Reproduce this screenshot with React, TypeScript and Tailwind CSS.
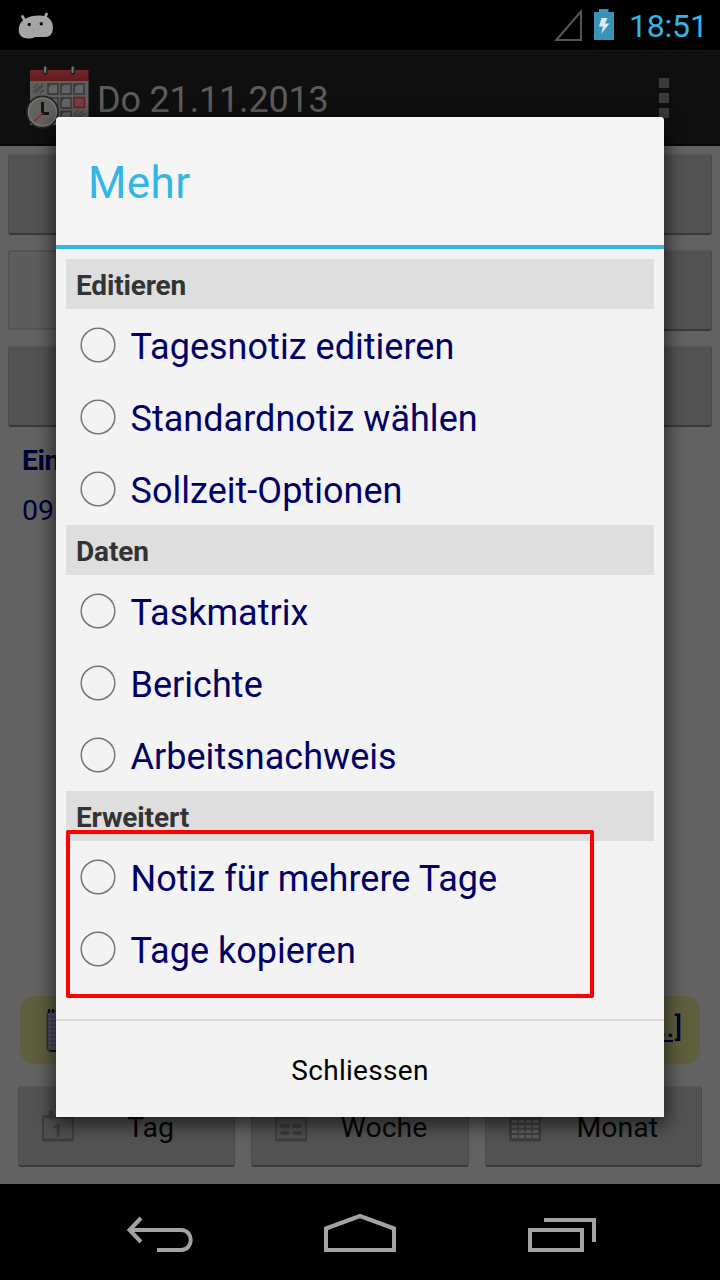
import type { ReactNode } from "react";

const sections = [
  { title: "Editieren", items: ["Tagesnotiz editieren", "Standardnotiz wählen", "Sollzeit-Optionen"] },
  { title: "Daten", items: ["Taskmatrix", "Berichte", "Arbeitsnachweis"] },
  { title: "Erweitert", items: ["Notiz für mehrere Tage", "Tage kopieren"] },
];

function AndroidHead() {
  return (
    <svg className="ml-[18px] h-8 w-9" viewBox="0 0 36 32">
      <path d="M4.500 7.500 7 12M28.500 5 27 9" stroke="#a6a6a6" strokeWidth="2.800" strokeLinecap="round" />
      <path d="M8 9.500C13 6 24 5.500 29 8C34 10.500 36 17 34.500 22C33 28 29 28 25 28L17 28C14 29.500 9 30.500 5 28.500C0 26 0 19 2 15C3.500 12 5.500 11 8 9.500Z" fill="#a6a6a6" />
      <circle cx="11.300" cy="15.500" r="1.700" fill="#000" />
      <circle cx="23.300" cy="14.700" r="1.700" fill="#000" />
      <path d="M15 20.500h1M20 20.500h1M15 23h1" stroke="#888" strokeWidth="1" />
    </svg>
  );
}

function StatusBar() {
  return (
    <div className="flex h-[50px] items-center bg-black">
      <AndroidHead />
      <svg className="ml-[500px] h-[34px] w-[30px] shrink-0" viewBox="0 0 30 34">
        <path d="M2.300 32 27 3.500V32Z" fill="none" stroke="#555" strokeWidth="2" />
      </svg>
      <svg className="ml-[9px] h-[34px] w-[22px] shrink-0" viewBox="0 0 22 34">
        <path d="M1 4H6V1H15.500V4H21V32H1Z" fill="#3994b8" />
        <path d="M8.500 10H14.500L12 15.500H16.500L8 26L10 18.500H6Z" fill="#dcecf2" />
      </svg>
      <span className="mt-[2px] ml-[14px] text-[32px] leading-[50px] tracking-[-0.200px] whitespace-nowrap text-[#33b5e5]">18:51</span>
    </div>
  );
}

function AppIcon() {
  return (
    <svg className="ml-[25px] h-[64px] w-[64px]" viewBox="25 65 64 64">
      <defs>
        <linearGradient id="red" x1="0" y1="0" x2="0" y2="1">
          <stop offset="0" stopColor="#742526" />
          <stop offset="1" stopColor="#641a1c" />
        </linearGradient>
      </defs>
      <rect x="30" y="80" width="58.500" height="45" fill="#5f5f5f" />
      <rect x="30" y="70" width="58.500" height="11" fill="url(#red)" />
      {[45.500, 73].map((x) => (
        <g key={x}>
          <rect x={x - 2.200} y="66" width="4.400" height="9" rx="2" fill="#202020" />
          <rect x={x - 1.400} y="66.500" width="2" height="6.500" rx="1" fill="#777" />
        </g>
      ))}
      <path d="M33 88l5-4M33 92l10-8M35 93l8-7M40 93l4-3M74 114l5-4M74 118l10-8M78 118l7-5" stroke="#454545" strokeWidth="1.500" />
      {[[47.500, 83.500], [60.500, 83.500], [73.500, 83.500], [47.500, 97.500], [60.500, 97.500], [60.500, 111]].map(([x, y]) => (
        <g key={`${x}-${y}`}>
          <rect x={x + 0.500} y={y + 0.500} width="10" height="10" fill="#656565" stroke="#383838" strokeWidth="1.600" />
          <path d={`M${x + 1} ${y + 1}h3l-3 3z`} fill="#383838" />
        </g>
      ))}
      <rect x="74" y="97.500" width="10.500" height="10" fill="#734043" stroke="#74191c" strokeWidth="1.500" />
      <circle cx="42.500" cy="112" r="16.500" fill="#252525" />
      <circle cx="42.500" cy="112" r="14" fill="#62625f" stroke="#777773" strokeWidth="1.500" />
      <path d="M42.500 102V113.500H49" fill="none" stroke="#151515" strokeWidth="3" />
      <path d="M43 113 34 121.500" stroke="#8b2929" strokeWidth="1.400" />
    </svg>
  );
}

function ActionBar() {
  return (
    <div className="flex h-24 border-t border-b-2 border-t-[#181818] border-b-[#080808] bg-[#0f0f0f]">
      <div className="pt-[14px]"><AppIcon /></div>
      <span className="ml-2 pt-[28px] text-[36px] leading-[42px] font-normal tracking-[-0.180px] whitespace-nowrap text-[#5c5c5c]">Do 21.11.2013</span>
      <div className="mr-[51px] ml-auto flex flex-col gap-[5px] pt-[27px]">
        <i className="size-[10px] bg-[#3b3b3b]" />
        <i className="size-[10px] bg-[#3b3b3b]" />
        <i className="size-[10px] bg-[#3b3b3b]" />
      </div>
    </div>
  );
}

function Panel({ className = "", children }: { className?: string; children?: ReactNode }) {
  return (
    <div className={`h-[81px] rounded-[3px] border border-t-[#595959] border-r-[#494949] border-b-2 border-b-[#3a3a3a] border-l-[#4c4c4c] bg-[#535353] ${className}`}>
      {children}
    </div>
  );
}

function CalendarIcon({ kind }: { kind: string }) {
  return (
    <svg className="h-[32px] w-[34px]" viewBox="0 0 34 32">
      <path d="M2 6H32V30H2Z" fill="#505050" stroke="#3e3e3e" strokeWidth="2" />
      <path d="M2 7H32M2 30H32" stroke="#3e3e3e" strokeWidth="3" />
      <path d="M10 3V7M24 3V7" stroke="#3d3d3d" strokeWidth="5" strokeLinecap="round" />
      {kind === "Tag" && <text x="16.500" y="27" textAnchor="middle" fontSize="19" fontWeight="bold" fill="#3a3a3a">1</text>}
      {kind === "Woche" && <path d="M6.500 16h9M18.500 16h9M6.500 23h9M18.500 23h9" stroke="#3a3a3a" strokeWidth="3.500" />}
      {kind === "Monat" && (
        <>
          <rect x="3" y="7" width="28" height="22" fill="#404040" />
          <path d="M4 11.500h27M4 16.500h27M4 21.500h27M4 26.500h27" stroke="#5e5e5e" strokeWidth="3" strokeDasharray="5.500 1.500" />
        </>
      )}
    </svg>
  );
}

function PeriodButton({ label }: { label: string }) {
  return (
    <Panel className="flex items-center pl-[22px]">
      <CalendarIcon kind={label} />
      <span className="mt-[3px] flex-1 pl-[8px] text-center text-[28.500px] leading-8 text-[#060606]">{label}</span>
      <span className="w-4" />
    </Panel>
  );
}

function Content() {
  return (
    <div className="flex h-[1038px] flex-col bg-[#626262]">
      <div className="flex flex-col gap-[15px] px-2 pt-2">
        <Panel />
        <div className="flex h-[81px]">
          <div className="h-20 w-1/2 rounded-[3px] border-2 border-[#535353] bg-[#5d5d5d]" />
          <Panel className="w-1/2" />
        </div>
        <Panel />
      </div>
      <div className="mt-[18px] ml-[22px] text-[28.500px] leading-8 text-[#000038]">
        <div className="font-bold tracking-[-0.500px]">Eintrag</div>
        <div className="mt-[18px]"><span>09</span><span className="ml-1">:00</span></div>
      </div>
      <div className="mx-5 mt-auto flex h-[68px] items-center justify-between rounded-[14px] bg-[#5f5f3d] pr-[18px] pl-[26px]">
        <svg className="h-11 w-9" viewBox="0 0 36 44">
          <rect x="1.500" y="3" width="33" height="40" rx="3" fill="#555560" stroke="#303030" strokeWidth="1.500" />
          <path d="M2 9h32M2 13h32M2 17h32M2 21h32M2 25h32M2 29h32M2 33h32M2 37h32" stroke="#3a3a68" />
          <path d="M5.500 5V42" stroke="#703344" />
          <path d="M3 1v4M7 1v4M11 1v4M15 1v4M4 43h28" stroke="#111" strokeWidth="2" />
        </svg>
        <span className="mb-[5px] text-[28px] leading-8 font-medium text-[#000030] underline decoration-2 underline-offset-[3px]">[...]</span>
      </div>
      <div className="mt-[22px] mb-[17px] grid grid-cols-3 gap-4 px-[18px]">
        <PeriodButton label="Tag" />
        <PeriodButton label="Woche" />
        <PeriodButton label="Monat" />
      </div>
    </div>
  );
}

function NavigationBar() {
  return (
    <div className="flex h-24 items-center bg-black pl-[126px]">
      <svg className="h-12 w-[70px]" viewBox="126 1208 70 48" fill="none" stroke="#a3a3a3" strokeWidth="4">
        <path d="M141 1218 129.500 1230 141 1242M130 1230H181C194 1230 194 1250 181 1250H157" />
      </svg>
      <svg className="ml-[126px] h-12 w-[76px]" viewBox="322 1208 76 48" fill="none" stroke="#a3a3a3" strokeWidth="4">
        <path d="M326 1250V1228.500L360 1216L394 1228.500V1250Z" />
      </svg>
      <svg className="ml-[128px] h-12 w-[72px]" viewBox="526 1208 72 48" fill="none" stroke="#a3a3a3" strokeWidth="4">
        <path d="M530 1230H582V1250H530ZM544 1220H594V1242" />
      </svg>
    </div>
  );
}

function MoreDialog() {
  return (
    <div role="dialog" className="absolute top-[117px] left-14 flex h-[1000px] w-[608px] flex-col rounded-t-[4px] bg-[#f3f3f3] shadow-[0_5px_18px_3px_rgba(0,0,0,0.6)]">
      <h1 className="h-32 rounded-t-[4px] bg-[#f5f5f5] pt-[40px] pl-8 text-[44px] leading-[52px] tracking-[0.400px] text-[#33b5e5]">Mehr</h1>
      <div className="h-1 bg-[#33b5e5]" />
      <div className="flex-1 px-[10px] pt-[10px]">
        {sections.map((section) => (
          <section key={section.title}>
            <h2 className="h-[50px] bg-[#dedede] pt-[2px] pl-[10px] text-[28px] leading-[50px] font-bold tracking-[-0.150px] text-[#333]">{section.title}</h2>
            {section.items.map((item) => (
              <label key={item} className="flex h-[72px] items-center pl-[14px]">
                <svg className="size-9 shrink-0" viewBox="0 0 36 36">
                  <circle cx="18" cy="18" r="16.800" fill="none" stroke="#777" strokeWidth="1.500" />
                </svg>
                <span className="mt-1 ml-[14.500px] text-[36px] leading-[42px] tracking-[0.030px] whitespace-nowrap text-[#000066]">{item}</span>
              </label>
            ))}
          </section>
        ))}
      </div>
      <button className="h-[98px] border-t-2 border-[#d9d9d9] pt-[3px] text-center text-[28px] leading-8 tracking-[0.300px] text-black">Schliessen</button>
    </div>
  );
}

export default function App() {
  return (
    <main className="relative h-[1280px] w-[720px] overflow-hidden bg-black font-[Roboto,sans-serif]">
      <StatusBar />
      <ActionBar />
      <Content />
      <NavigationBar />
      <MoreDialog />
      <div className="absolute top-[830px] left-[66px] h-[168px] w-[528px] rounded-[2px] border-4 border-[#ff0000]" />
    </main>
  );
}
